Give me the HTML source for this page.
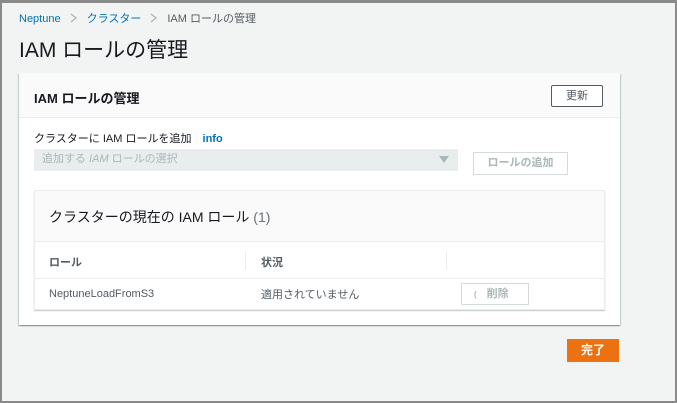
<!DOCTYPE html><html><head><meta charset="utf-8"><style>
*{box-sizing:border-box;margin:0;padding:0}
body{width:677px;height:403px;overflow:hidden;background:#f2f3f3;font-family:"Liberation Sans","Noto Sans CJK JP",sans-serif;position:relative;color:#16191f}
.frame{position:absolute;left:0;top:0;width:677px;height:403px;border:2px solid #8a8a8a;border-top:3px solid #8a8a8a;pointer-events:none}
.a{position:absolute}
</style></head><body>
<div class="a" style="left:19px;top:10px;font-size:11px;color:#545b64;white-space:nowrap"><span style="color:#0073bb">Neptune</span><svg width="26" height="10" style="vertical-align:-1px"><path d="M10 1 L15 5 L10 9" fill="none" stroke="#aab7b8" stroke-width="1.3"/></svg><span style="color:#0073bb">クラスター</span><svg width="26" height="10" style="vertical-align:-1px"><path d="M10 1 L15 5 L10 9" fill="none" stroke="#aab7b8" stroke-width="1.3"/></svg>IAM ロールの管理</div>
<div class="a" style="left:19px;top:34px;font-size:21px;color:#16191f">IAM ロールの管理</div>
<div class="a" style="left:19px;top:73px;width:601px;height:252px;background:#fff;box-shadow:0 1px 1px rgba(0,28,36,.3),1px 1px 1px rgba(0,28,36,.15),-1px 1px 1px rgba(0,28,36,.15)"></div>
<div class="a" style="left:19px;top:73px;width:601px;height:45px;background:#fafafa;border-bottom:1px solid #eaeded"></div>
<div class="a" style="left:34px;top:88px;font-size:13px;font-weight:bold">IAM ロールの管理</div>
<div class="a" style="left:551px;top:85px;width:52px;height:22px;border:1px solid #545b64;border-radius:2px;font-size:11px;text-align:center;line-height:20px;color:#545b64;background:#fff">更新</div>
<div class="a" style="left:34px;top:130px;font-size:11px">クラスターに IAM ロールを追加 <span style="color:#0073bb;font-weight:bold;margin-left:8px">info</span></div>
<div class="a" style="left:34px;top:149px;width:424px;height:22px;background:#eaeded;font-size:11px;color:#aab7b8;line-height:21px;padding-left:8px">追加する <i>IAM</i> ロールの選択<svg width="10" height="8" style="position:absolute;right:9px;top:7px"><path d="M0 0 H10 L5 7 Z" fill="#aab7b8"/></svg></div>
<div class="a" style="left:473px;top:152px;width:95px;height:23px;border:1px solid #d5dbdb;font-size:11px;color:#aab7b8;text-align:center;line-height:21px;font-weight:bold">ロールの追加</div>
<div class="a" style="left:34px;top:190px;width:571px;height:120px;border:1px solid #eaeded;box-shadow:0 1px 1px rgba(0,28,36,.25)"></div>
<div class="a" style="left:35px;top:191px;width:569px;height:51px;background:#fafafa;border-bottom:1px solid #eaeded"></div>
<div class="a" style="left:49px;top:207px;font-size:14px">クラスターの現在の IAM ロール <span style="color:#687078">(1)</span></div>
<div class="a" style="left:35px;top:278px;width:569px;border-top:1px solid #eaeded"></div>
<div class="a" style="left:245px;top:252px;height:18px;border-left:1px solid #eaeded"></div>
<div class="a" style="left:446px;top:252px;height:18px;border-left:1px solid #eaeded"></div>
<div class="a" style="left:49px;top:254px;font-size:11px;font-weight:bold;color:#545b64">ロール</div>
<div class="a" style="left:261px;top:254px;font-size:11px;font-weight:bold;color:#545b64">状況</div>
<div class="a" style="left:49px;top:288px;font-size:11px;color:#545b64">NeptuneLoadFromS3</div>
<div class="a" style="left:261px;top:286px;font-size:11px;color:#545b64">適用されていません</div>
<div class="a" style="left:461px;top:283px;width:68px;height:22px;border:1px solid #d5dbdb;font-size:11px;color:#aab7b8;line-height:20px;padding-left:12px;font-weight:bold"><span style="font-size:8px;margin-right:10px">(</span>削除</div>
<div class="a" style="left:567px;top:339px;width:52px;height:23px;background:#ec7211;color:#fff;font-size:12px;font-weight:bold;text-align:center;line-height:23px">完了</div>
<div class="frame"></div>
</body></html>
